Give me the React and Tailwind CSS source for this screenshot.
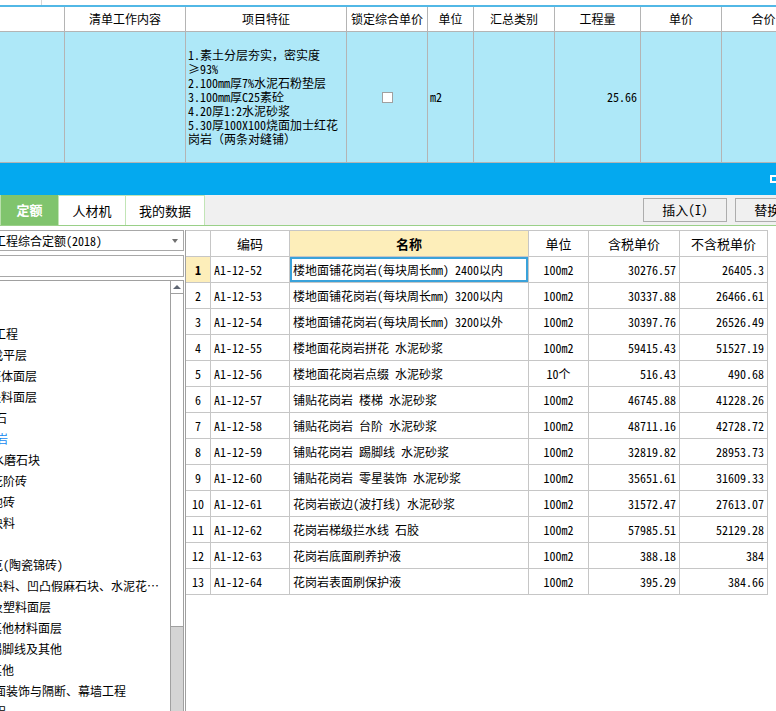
import React from "react";

const topHeads = ["", "清单工作内容", "项目特征", "锁定综合单价", "单位", "汇总类别", "工程量", "单价", "合价"];

const features = [
    "1.素土分层夯实，密实度",
    "≥93%",
    "2.100mm厚7%水泥石粉垫层",
    "3.100mm厚C25素砼",
    "4.20厚1:2水泥砂浆",
    "5.30厚100X100烧面加士红花",
    "岗岩（两条对缝铺）",
];

const tree = [
    { t: "", m: "" },
    { t: "", m: "" },
    { t: "楼地面工程", m: "-ml-[42px]" },
    { t: "找平层", m: "-ml-[9px]" },
    { t: "整体面层", m: "-ml-[11px]" },
    { t: "块料面层", m: "-ml-[11px]" },
    { t: "大理石", m: "-ml-[29px]" },
    { t: "花岗岩", m: "-ml-[28px]", sel: true },
    { t: "预制水磨石块", m: "-ml-[32px]" },
    { t: "水泥花阶砖", m: "-ml-[33px]" },
    { t: "陶瓷地砖", m: "-ml-[33px]" },
    { t: "玻璃块料", m: "-ml-[33px]" },
    { t: "", m: "" },
    { t: "马赛克(陶瓷锦砖)", m: "-ml-[33px]" },
    { t: "缸砖块料、凹凸假麻石块、水泥花…", m: "-ml-[33px]" },
    { t: "橡胶及塑料面层", m: "-ml-[33px]" },
    { t: "其他材料面层", m: "-ml-[10px]" },
    { t: "踢脚线及其他", m: "-ml-[10px]" },
    { t: "其他", m: "-ml-[10px]" },
    { t: "墙、柱面装饰与隔断、幕墙工程", m: "-ml-[42px]" },
    { t: "天棚工程", m: "-ml-[42px]" },
];

const rows = [
    ["A1-12-52", "楼地面铺花岗岩(每块周长mm) 2400以内", "100m2", "30276.57", "26405.3"],
    ["A1-12-53", "楼地面铺花岗岩(每块周长mm) 3200以内", "100m2", "30337.88", "26466.61"],
    ["A1-12-54", "楼地面铺花岗岩(每块周长mm) 3200以外", "100m2", "30397.76", "26526.49"],
    ["A1-12-55", "楼地面花岗岩拼花 水泥砂浆", "100m2", "59415.43", "51527.19"],
    ["A1-12-56", "楼地面花岗岩点缀 水泥砂浆", "10个", "516.43", "490.68"],
    ["A1-12-57", "铺贴花岗岩 楼梯 水泥砂浆", "100m2", "46745.88", "41228.26"],
    ["A1-12-58", "铺贴花岗岩 台阶 水泥砂浆", "100m2", "48711.16", "42728.72"],
    ["A1-12-59", "铺贴花岗岩 踢脚线 水泥砂浆", "100m2", "32819.82", "28953.73"],
    ["A1-12-60", "铺贴花岗岩 零星装饰 水泥砂浆", "100m2", "35651.61", "31609.33"],
    ["A1-12-61", "花岗岩嵌边(波打线) 水泥砂浆", "100m2", "31572.47", "27613.07"],
    ["A1-12-62", "花岗岩梯级拦水线 石胶", "100m2", "57985.51", "52129.28"],
    ["A1-12-63", "花岗岩底面刷养护液", "100m2", "388.18", "384"],
    ["A1-12-64", "花岗岩表面刷保护液", "100m2", "395.29", "384.66"],
];

const gridCols = "grid grid-cols-[25px_79px_239px_60px_91px_88px] w-[582px]";
const cell = "flex items-center border-r border-b border-[#c6c6c6] overflow-hidden whitespace-nowrap";

function TopTable() {
    const td = "border-r border-b border-[#b4b4b4] bg-[#aee8f8] h-[131px]";
    return (
        <div className="grid w-[806px] grid-cols-[65px_121px_161px_81px_46px_81px_86px_81px_84px]">
            {topHeads.map((h, i) => (
                <div key={i} className="flex h-[25px] items-center justify-center border-r border-b border-[#b4b4b4] bg-white text-[12px]">
                    {h}
                </div>
            ))}
            <div className={td} />
            <div className={td} />
            <div className={`${td} flex flex-col justify-center pl-[2px] leading-[14px]`}>
                {features.map((f) => (
                    <div key={f} className="whitespace-nowrap">{f}</div>
                ))}
            </div>
            <div className={`${td} flex items-center justify-center`}>
                <div className="h-[11px] w-[11px] border border-[#a0a0a0] bg-white" />
            </div>
            <div className={`${td} flex items-center pl-[2px]`}>m2</div>
            <div className={td} />
            <div className={`${td} flex items-center justify-end pr-[3px]`}>25.66</div>
            <div className={td} />
            <div className={td} />
        </div>
    );
}

function Tabs() {
    return (
        <div className="flex h-[31px] items-start overflow-hidden border-b border-[#9ad088] bg-[#f0f0f0]">
            <div className="h-[30px] w-[3px] border-r border-[#b9e0ac]" />
            <div className="flex h-[30px] w-[57px] shrink-0 items-center justify-center bg-[#80c46d] text-[13px] font-bold text-white">定额</div>
            <div className="flex h-[30px] w-[68px] shrink-0 items-center justify-center border-x border-t border-[#c2e5b6] bg-white text-[13px]">人材机</div>
            <div className="flex h-[30px] w-[79px] shrink-0 items-center justify-center border-r border-t border-[#c2e5b6] bg-white text-[13px]">我的数据</div>
            <div className="ml-[438px] mt-[3px] flex h-[24px] w-[84px] shrink-0 items-center justify-center border border-[#adadad] bg-[#f0f0f0] text-[13px]">插入(I)</div>
            <div className="ml-[8px] mt-[3px] flex h-[24px] w-[84px] shrink-0 items-center justify-center border border-[#adadad] bg-[#f0f0f0] text-[13px]">替换(R)</div>
        </div>
    );
}

function LeftPanel() {
    return (
        <div className="flex w-[184px] shrink-0 flex-col">
            <div className="flex h-[21px] items-center border-y border-r border-[#a8a8a8] bg-white">
                <div className="flex-1 overflow-hidden whitespace-nowrap">
                    <span className="-ml-[30px] inline-block text-[12px]">装饰工程综合定额(2018)</span>
                </div>
                <div className="mr-[5px] h-0 w-0 border-x-[3px] border-t-[4px] border-x-transparent border-t-[#707070]" />
            </div>
            <div className="mt-[4px] h-[22px] border-y border-r border-[#a8a8a8] bg-white" />
            <div className="mt-[3px] flex flex-1 overflow-hidden border-t border-r border-[#a0a0a0] bg-white">
                <div className="flex-1 overflow-hidden">
                    {tree.map((n, i) => (
                        <div key={i} className="h-[21px] whitespace-nowrap leading-[21px]">
                            <span className={`inline-block ${n.m} ${n.sel ? "text-[#1689f0]" : ""}`}>{n.t}</span>
                        </div>
                    ))}
                </div>
                <div className="flex w-[13px] flex-col border-l border-[#a0a0a0]">
                    <div className="flex h-[13px] items-center justify-center border-b border-[#a0a0a0] bg-white">
                        <div className="h-0 w-0 border-x-[4px] border-b-[4px] border-x-transparent border-b-[#5f6673]" />
                    </div>
                    <div className="h-[333px] border-b border-[#a0a0a0] bg-white" />
                    <div className="flex-1 bg-[#d4d4d4]" />
                </div>
            </div>
        </div>
    );
}

function QuotaGrid() {
    return (
        <div className="ml-[1px] flex-1 border-l border-[#a0a0a0] bg-white">
            <div className={`${gridCols} border-t border-[#c6c6c6] text-[13px]`}>
                <div className={`${cell} h-[26px]`} />
                <div className={`${cell} h-[26px] justify-center`}>编码</div>
                <div className={`${cell} h-[26px] justify-center bg-[#fdeeba] font-bold`}>名称</div>
                <div className={`${cell} h-[26px] justify-center`}>单位</div>
                <div className={`${cell} h-[26px] justify-center`}>含税单价</div>
                <div className={`${cell} h-[26px] justify-center`}>不含税单价</div>
            </div>
            {rows.map((r, i) => (
                <div key={r[0]} className={`${gridCols} text-[12px]`}>
                    <div className={`${cell} h-[26px] justify-center ${i === 0 ? "bg-[#fdeeba] font-bold" : ""}`}>{i + 1}</div>
                    <div className={`${cell} h-[26px] pl-[3px]`}>{r[0]}</div>
                    <div className={`${cell} h-[26px] pl-[3px] ${i === 0 ? "shadow-[inset_0_0_0_2px_#3aa2da]" : ""}`}>{r[1]}</div>
                    <div className={`${cell} h-[26px] justify-center`}>{r[2]}</div>
                    <div className={`${cell} h-[26px] justify-end pr-[3px]`}>{r[3]}</div>
                    <div className={`${cell} h-[26px] justify-end pr-[3px]`}>{r[4]}</div>
                </div>
            ))}
        </div>
    );
}

export default function App() {
    return (
        <div className="h-[711px] w-[776px] overflow-hidden bg-white font-[family-name:'Noto_Sans_Mono_CJK_SC','Noto_Sans_CJK_SC',monospace] text-[12px] text-black">
            <div className="flex h-[5px]">
                <div className="w-[42px] border-r border-[#d6d6d6]" />
            </div>
            <div className="h-[2px] bg-[#52b8e6]" />
            <TopTable />
            <div className="flex h-[32px] items-center justify-end bg-[#04a9ef]">
                <div className="h-[8px] w-[6px] border-y-2 border-l-2 border-white" />
            </div>
            <Tabs />
            <div className="flex h-[485px] pt-[4px]">
                <LeftPanel />
                <QuotaGrid />
            </div>
        </div>
    );
}
